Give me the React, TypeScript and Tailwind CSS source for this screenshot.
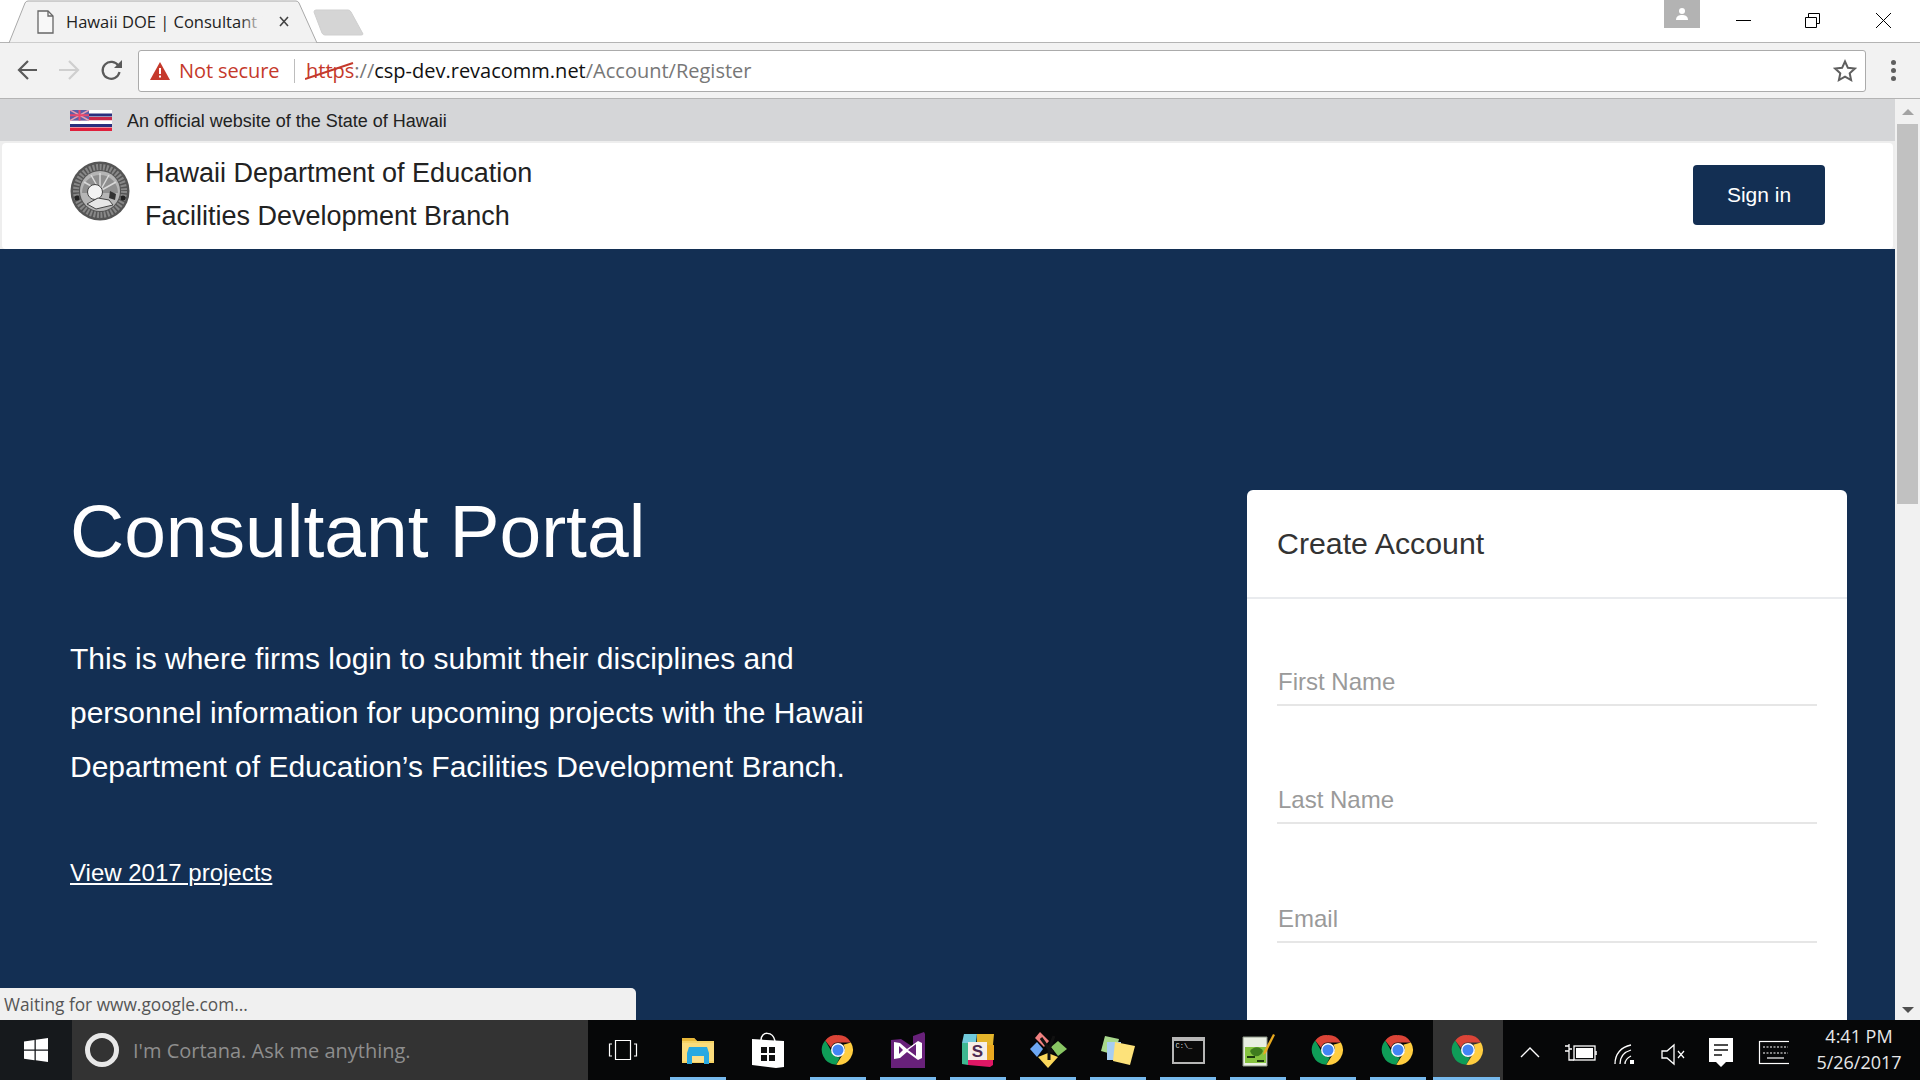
import { ReactNode } from "react";

const ui = "font-['Open_Sans',sans-serif]";
const page = "font-['Liberation_Sans',Arial,sans-serif]";

function ChromeIcon() {
  return (
    <svg width="34" height="34" viewBox="0 0 48 48">
      <path d="M24 3a21 21 0 0 1 18.2 10.5H24a10.500 10.500 0 0 0-10 7.300L6 10.500A21 21 0 0 1 24 3z" fill="#db4437" />
      <path d="M6 10.500l9.100 15.800A10.500 10.500 0 0 0 26.800 34.100L21.500 44.900A21 21 0 0 1 6 10.500z" fill="#0f9d58" />
      <path d="M42.200 13.500A21 21 0 0 1 21.500 44.900l9.800-15.700A10.500 10.500 0 0 0 31.500 16.500z" fill="#ffcd40" />
      <circle cx="24" cy="24" r="9.800" fill="#fff" />
      <circle cx="24" cy="24" r="7.800" fill="#4285f4" />
    </svg>
  );
}

function FolderIcon() {
  return (
    <svg width="32" height="27" viewBox="0 0 32 27">
      <path d="M0 1h12l3 3h17v22H0z" fill="#f6d365" />
      <path d="M0 1h12l3 3H0z" fill="#e8b739" />
      <path d="M0 6h32v18H0z" fill="#fbdc7c" />
      <path d="M5 16l2-6h18l2 6v11h-5v-8H10v8H5z" fill="#29a9e1" />
      <rect x="10" y="19" width="12" height="6" fill="#fde08a" />
    </svg>
  );
}

function StoreIcon() {
  return (
    <svg width="32" height="36" viewBox="0 0 32 36">
      <path d="M9 8C9-1 21-1 23 9" fill="none" stroke="#fff" strokeWidth="1.500" />
      <path d="M0 7l32 2v26l-8 1-24-3z" fill="#fff" />
      <path d="M9 15h6v6H9zM17 15h6v6h-6zM9 23h6v6H9zM17 23h6v6h-6z" fill="#111" />
    </svg>
  );
}

function VsIcon() {
  return (
    <svg width="34" height="36" viewBox="0 0 34 36">
      <path d="M0 8l10-1 12 8V4l11-4 1 2v34H0z" fill="#68217a" />
      <path d="M3 10l6 1 7 6 11-8 4 2v15l-4 2-11-8-7 6-6 1z" fill="#fff" />
      <path d="M8 14l4 4-4 4zM25 12l-8 6 8 6z" fill="#68217a" />
    </svg>
  );
}

function SlackIcon() {
  return (
    <svg width="32" height="33" viewBox="0 0 32 33">
      <path d="M2 0h13l-1 9H0z" fill="#70cadb" />
      <path d="M15 0h17l-1 11H15z" fill="#e4b52b" />
      <path d="M0 9h7l-1 22-6-1z" fill="#3eb890" />
      <path d="M6 25h25v6l-3 2-22-2z" fill="#e01765" />
      <path d="M25 11h7v15h-7z" fill="#e9a820" />
      <rect x="6" y="8" width="19" height="18" fill="#f6eee8" />
      <text x="15.500" y="23" textAnchor="middle" fontSize="17" fontWeight="700" fontFamily="Liberation Sans" fill="#4d2a51">S</text>
    </svg>
  );
}

function SourceTreeIcon() {
  return (
    <svg width="37" height="36" viewBox="0 0 37 36">
      <path d="M10 0l9 9-5 6L5 6z" fill="#f08080" />
      <path d="M0 17l7-7 6 7-6 8z" fill="#6da7f2" />
      <path d="M37 17l-9-8-7 6 7 9z" fill="#89c664" />
      <path d="M18 36L8 25l10-4 10 4z" fill="#fbd75b" />
      <path d="M11 6l8 11v11M24 4l-5 13 4 3" fill="none" stroke="#111" strokeWidth="3" />
    </svg>
  );
}

function StickyIcon() {
  return (
    <svg width="34" height="29" viewBox="0 0 34 29">
      <path d="M4 0l14 3-4 16L0 15z" fill="#a8d88c" />
      <path d="M6 6h14v18H6z" fill="#a6cdf2" />
      <path d="M14 6l20 4-5 19-17-4z" fill="#fde27a" />
    </svg>
  );
}

function CmdIcon() {
  return (
    <div className="w-[33px] h-[27px] border-2 border-[#b6b6b6] bg-[#0a0a0a] flex flex-col">
      <div className="h-[2px] bg-[#b6b6b6]" />
      <span className="text-[7px] leading-[10px] text-[#ddd] pl-[2px] font-['Liberation_Mono',monospace]">C:\_</span>
    </div>
  );
}

function NotepadIcon() {
  return (
    <svg width="33" height="33" viewBox="0 0 33 33">
      <path d="M1 3h24v29H1z" fill="#e9efe2" stroke="#8a9484" />
      <path d="M3 13h21v16H3z" fill="#86c440" />
      <path d="M8 17c4-5 10-5 13 0-2 6-10 8-13 0z" fill="#3f7d1e" />
      <path d="M5 23h8M15 27h7" stroke="#1c3a0e" strokeWidth="2" />
      <path d="M31 0l2 1-9 18-3 2 1-4z" fill="#e8a91e" />
    </svg>
  );
}

function Flag() {
  return (
    <svg width="42" height="21" viewBox="0 0 42 21" className="shrink-0">
      <rect width="42" height="21" fill="#fff" />
      <rect y="3.500" width="42" height="3" fill="#2a2f7e" />
      <rect y="7" width="42" height="3.500" fill="#c8284a" />
      <rect y="10.500" width="42" height="3.500" fill="#fff" />
      <rect y="14" width="42" height="3" fill="#2a2f7e" />
      <rect y="17.500" width="42" height="3.500" fill="#e0203c" />
      <rect width="19" height="10.500" fill="#5b5fa8" />
      <path d="M0 0l19 10.500M19 0L0 10.500" stroke="#e8a0b0" strokeWidth="1.500" />
      <path d="M9.500 0v10.500M0 5.250h19" stroke="#e8486c" strokeWidth="2" />
    </svg>
  );
}

function Seal() {
  return (
    <svg width="60" height="60" viewBox="0 0 60 60" className="shrink-0 mb-[10px]">
      <circle cx="30" cy="30" r="29.500" fill="#555" />
      <circle cx="30" cy="30" r="24" fill="none" stroke="#888" strokeWidth="6" strokeDasharray="2 1.500" />
      <circle cx="30" cy="30" r="20" fill="#b5b5b5" />
      <path d="M12 32a18 18 0 0 1 36 0z" fill="#8f8f8f" />
      <path d="M30 12v18M21 14l9 16M39 14l-9 16M14 21l16 9M46 21l-16 9" stroke="#d8d8d8" strokeWidth="1.500" />
      <circle cx="25" cy="31" r="7.500" fill="#f2f2f2" stroke="#444" />
      <path d="M17 43l11-6 11 2 4 5-17 4z" fill="#e6e6e6" stroke="#444" />
      <path d="M40 30l6 3-1 6-6-2z" fill="#333" />
      <circle cx="7" cy="37" r="2.500" fill="#222" />
      <circle cx="53" cy="37" r="2.500" fill="#222" />
    </svg>
  );
}

function Field({ label }: { label: string }) {
  return (
    <div className="h-[118.500px] flex flex-col justify-end shrink-0">
      <div className="border-b-2 border-[#e6e6e6] h-[50px] pt-[8px] text-[24px] leading-[36px] text-[#9a9a9a] pl-[1px]">{label}</div>
    </div>
  );
}

function TaskItem({ children, on = true, active = false }: { children: ReactNode; on?: boolean; active?: boolean }) {
  return (
    <div className={`w-[70px] h-full shrink-0 flex items-center justify-center relative ${active ? "bg-[#333333]" : ""}`}>
      {children}
      {on && <div className={`absolute bottom-0 h-[3px] bg-[#76b9ed] ${active ? "left-0 right-[3px]" : "left-[7px] right-[7px]"}`} />}
    </div>
  );
}

export default function App() {
  return (
    <div className={`w-[1920px] h-[1080px] overflow-hidden flex flex-col bg-white ${page}`}>
      {/* tab strip */}
      <div className="h-[43px] shrink-0 relative bg-white border-b border-[#b4b4b4] flex items-start">
        <svg width="370" height="43" viewBox="0 0 370 43" className="absolute left-0 top-0">
          <path d="M9 43L25 3q1-2 3-2h268q2 0 3 2l18 40z" fill="#f2f2f2" stroke="#a8a8a8" />
          <path d="M314 12q0-2 2-2h32q2 0 3 2l12 22q0 1-2 1h-36q-2 0-3-2z" fill="#d5d5d5" stroke="#cfcfcf" />
          <path d="M38 11h10l5 5v17H38z" fill="#f8f8f8" stroke="#666" strokeWidth="1.300" />
          <path d="M48 11v5h5" fill="none" stroke="#666" strokeWidth="1.300" />
          <path d="M280 17l8 9M288 17l-8 9" stroke="#444" strokeWidth="1.600" />
        </svg>
        <div className={`absolute left-[66px] top-[9px] w-[198px] overflow-hidden whitespace-nowrap text-[16.500px] leading-[26px] text-[#222] ${ui}`}>
          Hawaii DOE | Consultant
        </div>
        <div className="absolute left-[240px] top-[9px] w-[24px] h-[26px] bg-gradient-to-r from-transparent to-[#f2f2f2]" />
        <div className="ml-auto flex items-start">
          <div className="w-[36px] h-[28px] bg-[#b3b3b3] flex items-center justify-center">
            <svg width="14" height="14" viewBox="0 0 14 14">
              <circle cx="7" cy="4" r="3" fill="#fff" />
              <path d="M1 13c0-4 3-5 6-5s6 1 6 5z" fill="#fff" />
            </svg>
          </div>
          <div className="w-[220px] h-[42px] relative">
            <svg width="220" height="42" viewBox="0 0 220 42" className="absolute left-0 top-0">
              <path d="M36 20.500h15" stroke="#000" strokeWidth="1" />
              <path d="M105.500 17.500h11v10h-11zM108.500 17V13.500h11v10h-3" fill="none" stroke="#000" strokeWidth="1" />
              <path d="M176 13l15 15M191 13l-15 15" stroke="#000" strokeWidth="1" />
            </svg>
          </div>
        </div>
      </div>

      {/* toolbar */}
      <div className="h-[56px] shrink-0 bg-[#f2f2f2] border-b border-[#b4b4b4] flex items-center">
        <div className="w-[138px] shrink-0 h-full relative">
          <svg width="138" height="55" viewBox="0 0 138 55">
            <path d="M37 27H20M28 18l-9 9 9 9" fill="none" stroke="#5a5a5a" strokeWidth="2.200" />
            <path d="M59 27h18M69 18l9 9-9 9" fill="none" stroke="#cfcfcf" strokeWidth="2.200" />
            <path d="M118.500 23a8.500 8.500 0 1 0 1 6" fill="none" stroke="#5a5a5a" strokeWidth="2.200" />
            <path d="M122 17v8h-8z" fill="#5a5a5a" />
          </svg>
        </div>
        <div className={`w-[1728px] h-[42px] bg-white border border-[#ababab] rounded-[3px] flex items-center shrink-0 text-[20px] ${ui}`}>
          <svg width="20" height="18" viewBox="0 0 20 18" className="ml-[11px] shrink-0">
            <path d="M10 0l10 18H0z" fill="#c5392b" />
            <rect x="9" y="6" width="2" height="6" fill="#fff" />
            <rect x="9" y="13.500" width="2" height="2" fill="#fff" />
          </svg>
          <span className="ml-[9px] text-[#c5392b] w-[115px] shrink-0 whitespace-nowrap tracking-[-0.1px]">Not secure</span>
          <div className="w-px h-[24px] bg-[#bdbdbd] shrink-0" />
          <div className="relative ml-[11px] whitespace-nowrap">
            <span className="text-[#c5392b]">https</span>
            <span className="text-[#777]">://</span>
            <span className="text-[#111]">csp-dev.revacomm.net</span>
            <span className="text-[#777]">/Account/Register</span>
            <svg width="50" height="20" viewBox="0 0 50 20" className="absolute left-[-1px] top-[5px]">
              <path d="M0 18L48 2" stroke="#c5392b" strokeWidth="2" />
            </svg>
          </div>
          <svg width="24" height="24" viewBox="0 0 24 24" className="ml-auto mr-[8px] shrink-0">
            <path d="M12 2.500l2.900 6.300 6.900.8-5.100 4.700 1.400 6.800-6.100-3.400-6.100 3.400 1.400-6.800L2.200 9.600l6.900-.8z" fill="none" stroke="#5f5f5f" strokeWidth="2" />
          </svg>
        </div>
        <div className="flex-1 flex flex-col items-center gap-[3px]">
          <div className="w-[5px] h-[5px] rounded-full bg-[#5f5f5f]" />
          <div className="w-[5px] h-[5px] rounded-full bg-[#5f5f5f]" />
          <div className="w-[5px] h-[5px] rounded-full bg-[#5f5f5f]" />
        </div>
      </div>

      {/* page */}
      <div className="flex-1 min-h-0 flex relative">
        <div className="flex-1 min-w-0 flex flex-col overflow-hidden">
          <div className="h-[42px] shrink-0 bg-[#d5d6d8] flex items-center pl-[70px] gap-[15px]">
            <Flag />
            <span className="text-[18px] text-[#222] mt-[2px]">An official website of the State of Hawaii</span>
          </div>
          <div className="h-[108px] shrink-0 bg-[#eeeeee] pt-[2px] px-[2px]">
            <div className="h-[106px] bg-white rounded-[4px] flex items-center pl-[68px] pr-[68px]">
              <Seal />
              <div className="ml-[15px] text-[27px] leading-[43px] text-[#222] mb-[2px]">
                <div>Hawaii Department of Education</div>
                <div>Facilities Development Branch</div>
              </div>
              <button className="ml-auto w-[132px] h-[60px] bg-[#132f53] text-white text-[21px] rounded-[4px] mb-[2px]">Sign in</button>
            </div>
          </div>
          <div className="flex-1 min-h-0 bg-[#132f53] flex justify-between pl-[70px] pr-[48px] pt-[241px]">
            <div className="text-white">
              <h1 className="text-[75px] leading-[86px] mt-[-2px]">Consultant Portal</h1>
              <p className="text-[30px] leading-[54px] mt-[58px] w-[800px]">
                This is where firms login to submit their disciplines and
                <br />
                personnel information for upcoming projects with the Hawaii
                <br />
                Department of Education’s Facilities Development Branch.
              </p>
              <a className="block mt-[61px] text-[24px] leading-[36px] underline">View 2017 projects</a>
            </div>
            <div className="w-[600px] bg-white rounded-t-[6px] shrink-0 h-[600px]">
              <div className="h-[109px] pt-[1px] border-b-2 border-[#e9ebee] flex items-center pl-[30px] text-[30.300px] text-[#333]">Create Account</div>
              <div className="px-[30px] mt-[-12px]">
                <Field label="First Name" />
                <Field label="Last Name" />
                <Field label="Email" />
              </div>
            </div>
          </div>
        </div>
        {/* scrollbar */}
        <div className="w-[25px] shrink-0 bg-[#f1f1f1] flex flex-col items-center">
          <div className="h-[25px] flex items-center justify-center shrink-0">
            <div className="w-0 h-0 border-x-[6px] border-x-transparent border-b-[6px] border-b-[#a3a3a3]" />
          </div>
          <div className="w-[21px] h-[380px] bg-[#c1c1c1] shrink-0" />
          <div className="mt-auto h-[20px] flex items-center justify-center shrink-0">
            <div className="w-0 h-0 border-x-[6px] border-x-transparent border-t-[6px] border-t-[#505050]" />
          </div>
        </div>
        {/* status bubble */}
        <div className={`absolute left-0 bottom-0 w-[636px] h-[32px] bg-[#f0f0f0] rounded-tr-[5px] pl-[4px] pt-[1px] text-[17.300px] leading-[32px] text-[#555] ${ui}`}>
          Waiting for www.google.com...
        </div>
      </div>

      {/* taskbar */}
      <div className={`h-[60px] shrink-0 bg-[#060708] flex items-center text-white ${ui}`}>
        <div className="w-[72px] h-full bg-[#16191c] flex items-center justify-center shrink-0">
          <svg width="24" height="24" viewBox="0 0 24 24">
            <path d="M0 3.500l10.500-1.500v9.500H0zM11.800 1.800L24 0v11.500H11.800zM0 12.700h10.500v9.500L0 20.700zM11.800 12.700H24V24l-12.200-1.800z" fill="#fff" />
          </svg>
        </div>
        <div className="w-[516px] h-full bg-[#333333] flex items-center shrink-0 pl-[13px]">
          <div className="w-[34px] h-[34px] rounded-full border-[5px] border-[#e8e8e8] bg-transparent shrink-0" />
          <span className="ml-[14px] mt-[2px] text-[20px] text-[#8e8e8e] whitespace-nowrap">I'm Cortana. Ask me anything.</span>
        </div>
        <div className="w-[75px] h-full shrink-0 flex items-center justify-center pr-[5px]">
          <svg width="30" height="22" viewBox="0 0 30 22">
            <path d="M7.500 1.500h15v19h-15z" fill="none" stroke="#fff" strokeWidth="1.200" />
            <path d="M4 5H1.500v12H4M26 5h2.500v12H26" fill="none" stroke="#fff" strokeWidth="1.200" />
          </svg>
        </div>
        <TaskItem><FolderIcon /></TaskItem>
        <TaskItem on={false}><StoreIcon /></TaskItem>
        <TaskItem><ChromeIcon /></TaskItem>
        <TaskItem><VsIcon /></TaskItem>
        <TaskItem><SlackIcon /></TaskItem>
        <TaskItem><SourceTreeIcon /></TaskItem>
        <TaskItem><StickyIcon /></TaskItem>
        <TaskItem><CmdIcon /></TaskItem>
        <TaskItem><NotepadIcon /></TaskItem>
        <TaskItem><ChromeIcon /></TaskItem>
        <TaskItem><ChromeIcon /></TaskItem>
        <TaskItem active><ChromeIcon /></TaskItem>
        <div className="flex-1 h-full relative">
          <svg width="290" height="60" viewBox="0 0 290 60" className="absolute left-[-4px] top-0">
            <path d="M22 37l9-9 9 9" fill="none" stroke="#fff" strokeWidth="1.400" />
            <path d="M66 26h4M66 31h4M70 24v10M73 29H70M70 34v6h5" fill="none" stroke="#fff" strokeWidth="1.300" />
            <rect x="75" y="26" width="21" height="14" fill="none" stroke="#fff" strokeWidth="1.300" />
            <rect x="77" y="28" width="17" height="10" fill="#fff" />
            <path d="M97 31v4" stroke="#fff" strokeWidth="1.500" />
            <path d="M116 44c0-10 6-17 16-19M121 44c0-7 4-12 11-14M126 44c0-3 2-6 6-8" fill="none" stroke="#fff" strokeWidth="1.300" />
            <rect x="131" y="40" width="4" height="4" fill="#fff" />
            <path d="M163 31h5l7-6v19l-7-6h-5z" fill="none" stroke="#fff" strokeWidth="1.300" />
            <path d="M179 31l6 7M185 31l-6 7" stroke="#fff" strokeWidth="1.200" />
            <path d="M210 18h24v24h-7l-5 5-5-5h-7z" fill="#fff" />
            <path d="M215 25h14M215 30h14M215 35h8" stroke="#111" strokeWidth="1.400" />
            <rect x="260.500" y="21.500" width="32" height="22" fill="none" stroke="#fff" strokeWidth="1.200" />
            <path d="M264 27h25M264 33h25" stroke="#fff" strokeWidth="1.200" strokeDasharray="2 1.500" />
            <path d="M268 38h17" stroke="#fff" strokeWidth="1.200" />
          </svg>
          <div className="absolute right-[16px] top-[3px] w-[90px] text-center text-[18px] leading-[26px] text-[#e8e8e8]">
            <div>4:41 PM</div>
            <div className="whitespace-nowrap">5/26/2017</div>
          </div>
        </div>
      </div>
    </div>
  );
}
